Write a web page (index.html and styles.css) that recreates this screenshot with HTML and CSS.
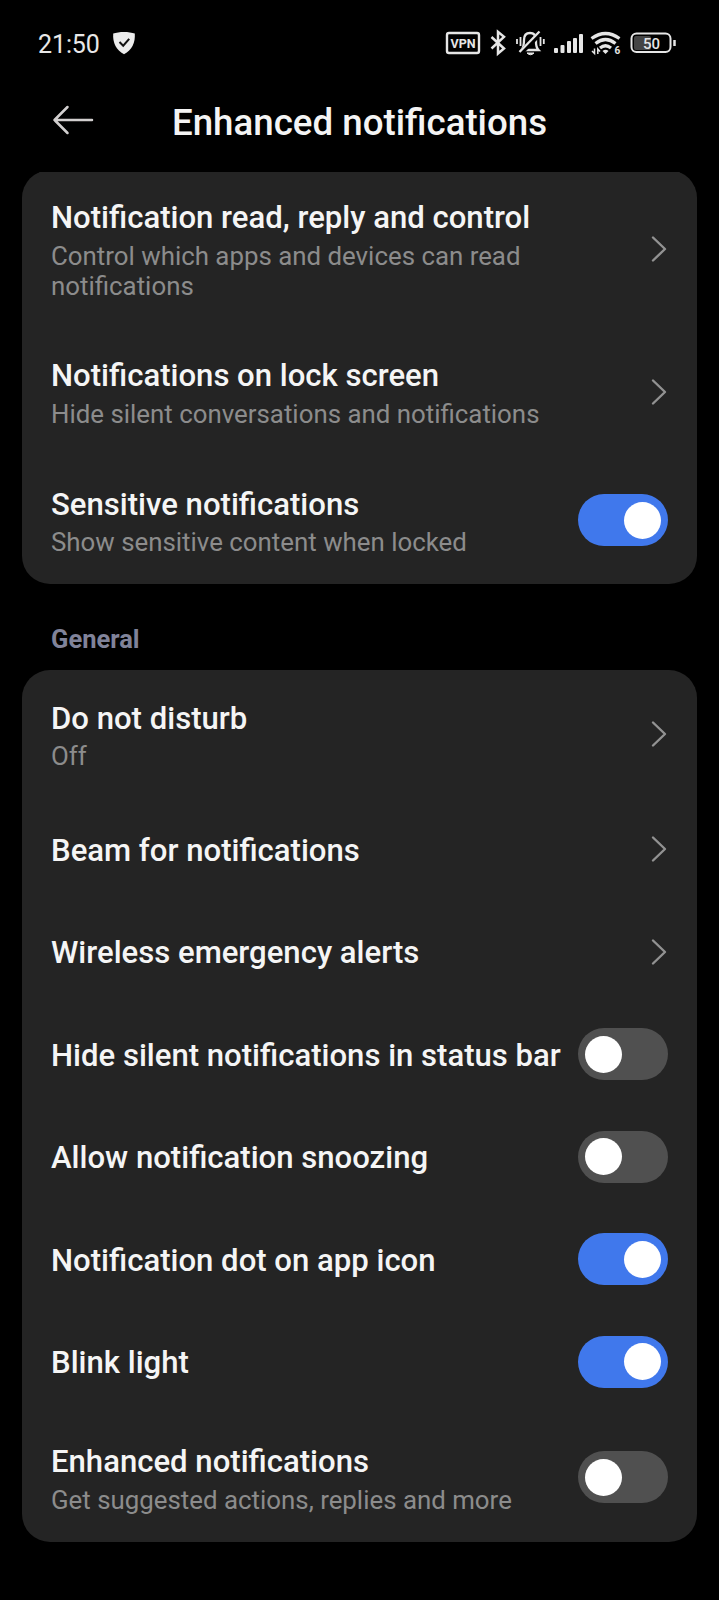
FILE: index.html
```html
<!DOCTYPE html>
<html lang="en">
<head>
<meta charset="utf-8">
<title>Enhanced notifications</title>
<link rel="stylesheet" href="styles.css">
</head>
<body>
<div class="screen">
  <div class="statusbar">
    <span class="clock">21:50</span>
    <svg class="shield" width="24" height="24" viewBox="0 0 24 24"><path d="M12 1C16 1 20 1.600 22.800 2.600C23.400 12 20 19 12 23.200C4 19 .6 12 1.200 2.600C4 1.600 8 1 12 1Z" fill="#ececec"/><path d="M7.500 11l3.700 3.700 6-6.900" fill="none" stroke="#111" stroke-width="2"/></svg>
    <svg class="status-icons" width="232" height="30" viewBox="445 28 232 30" fill="none" stroke="#e6e6e6">
      <rect x="447" y="33" width="32" height="20" rx="2" stroke-width="2.400"/>
      <text class="vpn" x="463" y="47.500" text-anchor="middle">VPN</text>
      <path d="M491.500 37L504 48.500L498 53.500V31.800L504 36.800L491.500 48.500" stroke-width="2.500"/>
      <path d="M521.500 50H538.500C535.500 47 536 44 536 40C536 35 533.500 33 530 33S524 35 524 40C524 44 524 47 521.500 50Z" stroke-width="2.300"/>
      <path d="M527 53H534Q530.500 56.500 527 53Z" fill="#e6e6e6" stroke-width="1"/>
      <path d="M520.500 53L541 32.500" stroke="#000" stroke-width="5"/>
      <path d="M519.500 52L539.500 31.500" stroke-width="2.300"/>
      <path d="M520.500 37V46M517 39V44M540.500 37V46M543.800 39V44" stroke-width="1.800"/>
      <g fill="#e6e6e6" stroke="none">
        <rect x="554" y="48" width="4" height="5" rx="1"/><rect x="560.500" y="45" width="4" height="8" rx="1"/><rect x="567" y="41" width="4" height="12" rx="1"/><rect x="573" y="38" width="4" height="15" rx="1"/><rect x="579" y="34" width="4" height="19" rx="1"/>
      </g>
      <path d="M591.500 38.500Q605.500 28.500 619.500 38.500" stroke-width="3.200"/>
      <path d="M595.500 43.500Q605.500 35.500 615.500 43.500" stroke-width="3.200"/>
      <path d="M600 48Q605.500 43.500 611 48" stroke-width="3.200"/>
      <path d="M602.500 51Q605.500 48.500 608.500 51L605.500 54Z" fill="#e6e6e6" stroke="none"/>
      <path d="M594.500 48.500V53.500L592 51M597.800 54V49L600 51.500" stroke-width="1.500"/>
      <text class="wifi-gen" x="614.500" y="54">6</text>
      <rect x="634" y="36" width="17" height="14" rx="2" fill="#454545" stroke="none"/>
      <rect x="631.500" y="33.500" width="39" height="18.500" rx="5" stroke-width="2"/>
      <text class="battery" x="651.500" y="49" text-anchor="middle">50</text>
      <path d="M674.500 40V46" stroke-width="2.500"/>
    </svg>
  </div>
  <div class="header">
    <svg class="back" width="42" height="32" viewBox="0 0 42 32"><path d="M15.500 3L2.500 16L15.500 29M2.500 16H40" fill="none" stroke="#d2cfcf" stroke-width="2.500" stroke-linecap="round" stroke-linejoin="round"/></svg>
    <h1 class="heading">Enhanced notifications</h1>
  </div>
  <div class="content">
    <div class="card card-first">
      <div class="row row-tall">
        <div class="label"><div class="title">Notification read, reply and control</div><div class="sub">Control which apps and devices can read<br>notifications</div></div>
        <svg class="chevron" width="18" height="28" viewBox="0 0 18 28"><path d="M3 2.500L15 14L3 25.500"/></svg>
      </div>
      <div class="row row-double">
        <div class="label"><div class="title">Notifications on lock screen</div><div class="sub">Hide silent conversations and notifications</div></div>
        <svg class="chevron" width="18" height="28" viewBox="0 0 18 28"><path d="M3 2.500L15 14L3 25.500"/></svg>
      </div>
      <div class="row row-double">
        <div class="label"><div class="title">Sensitive notifications</div><div class="sub">Show sensitive content when locked</div></div>
        <div class="toggle on"><div class="knob"></div></div>
      </div>
    </div>
    <div class="section">General</div>
    <div class="card">
      <div class="row row-double">
        <div class="label"><div class="title">Do not disturb</div><div class="sub">Off</div></div>
        <svg class="chevron" width="18" height="28" viewBox="0 0 18 28"><path d="M3 2.500L15 14L3 25.500"/></svg>
      </div>
      <div class="row">
        <div class="label"><div class="title">Beam for notifications</div></div>
        <svg class="chevron" width="18" height="28" viewBox="0 0 18 28"><path d="M3 2.500L15 14L3 25.500"/></svg>
      </div>
      <div class="row">
        <div class="label"><div class="title">Wireless emergency alerts</div></div>
        <svg class="chevron" width="18" height="28" viewBox="0 0 18 28"><path d="M3 2.500L15 14L3 25.500"/></svg>
      </div>
      <div class="row">
        <div class="label"><div class="title">Hide silent notifications in status bar</div></div>
        <div class="toggle"><div class="knob"></div></div>
      </div>
      <div class="row">
        <div class="label"><div class="title">Allow notification snoozing</div></div>
        <div class="toggle"><div class="knob"></div></div>
      </div>
      <div class="row">
        <div class="label"><div class="title">Notification dot on app icon</div></div>
        <div class="toggle on"><div class="knob"></div></div>
      </div>
      <div class="row">
        <div class="label"><div class="title">Blink light</div></div>
        <div class="toggle on"><div class="knob"></div></div>
      </div>
      <div class="row row-double">
        <div class="label"><div class="title">Enhanced notifications</div><div class="sub">Get suggested actions, replies and more</div></div>
        <div class="toggle"><div class="knob"></div></div>
      </div>
    </div>
  </div>
</div>
</body>
</html>
```
FILE: styles.css
```css
* { box-sizing: border-box; }
body { margin: 0; background: #000; font-family: Roboto, "Liberation Sans", sans-serif; }
.screen { width: 719px; height: 1600px; overflow: hidden; background: #000; }
.statusbar { height: 86px; padding: 0 42px 0 38px; display: flex; align-items: center; }
.clock { color: #e8e8e8; font-size: 25px; line-height: 30px; letter-spacing: -0.1px; margin-top: 3px; }
.shield { margin-left: 12.500px; }
.status-icons { margin-left: auto; }
.status-icons text { fill: #e6e6e6; stroke: none; font-family: Roboto, sans-serif; }
.vpn { font-size: 12.500px; font-weight: 700; }
.wifi-gen { font-size: 10px; font-weight: 700; }
.battery { font-size: 15px; font-weight: 500; }
.header { height: 86px; padding: 0 52px; display: grid; grid-template-columns: 42px 1fr 42px; align-items: start; }
.back { margin-top: 18px; }
.heading { margin: 16px 0 0; color: #f4f4f4; font-size: 36.700px; font-weight: 500; line-height: 42px; text-align: center; white-space: nowrap; }
.content { padding: 0 22px; overflow: hidden; }
.card { background: #242424; border-radius: 28px; overflow: hidden; }
.card-first { margin-top: -2.250px; }
.row { height: 102.500px; padding: 0 29px; display: flex; align-items: center; justify-content: space-between; }
.row-double { height: 128.500px; }
.row-tall { height: 157.500px; }
.label { padding-top: 3px; white-space: nowrap; }
.title { color: #f5f5f5; font-size: 31.100px; font-weight: 500; line-height: 38px; }
.sub { color: #8c8c8c; font-size: 25.850px; line-height: 30px; margin-top: 3.500px; }
.chevron { fill: none; stroke: #929292; stroke-width: 2.400; stroke-linecap: round; stroke-linejoin: round; }
.toggle { width: 90px; height: 52px; border-radius: 26px; padding: 0 7px; display: flex; align-items: center; background: #505050; flex: none; }
.toggle.on { background: #4078ec; justify-content: flex-end; }
.knob { width: 37px; height: 37px; border-radius: 50%; background: #fff; }
.section { height: 85.250px; padding: 40px 29px 0; color: #80839a; font-size: 25.500px; font-weight: 700; line-height: 31px; }
```
